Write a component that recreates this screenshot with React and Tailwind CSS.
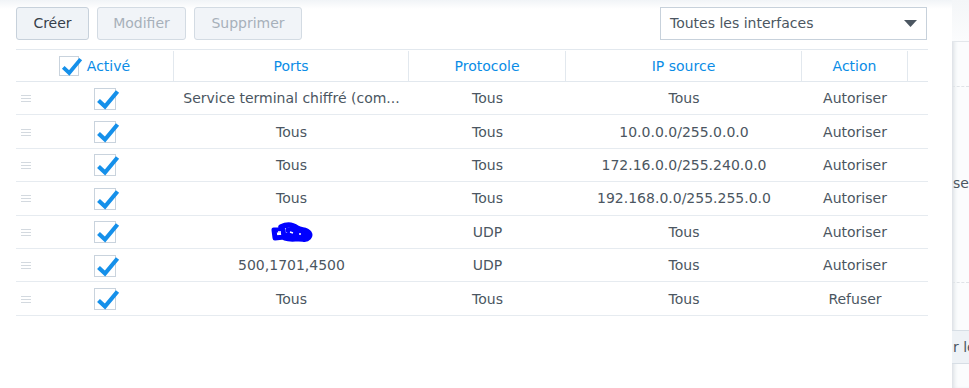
import React from 'react';

const rows = [
  { ports: 'Service terminal chiffré (com...', proto: 'Tous', ip: 'Tous', action: 'Autoriser' },
  { ports: 'Tous', proto: 'Tous', ip: '10.0.0.0/255.0.0.0', action: 'Autoriser' },
  { ports: 'Tous', proto: 'Tous', ip: '172.16.0.0/255.240.0.0', action: 'Autoriser' },
  { ports: 'Tous', proto: 'Tous', ip: '192.168.0.0/255.255.0.0', action: 'Autoriser' },
  { ports: null, proto: 'UDP', ip: 'Tous', action: 'Autoriser' },
  { ports: '500,1701,4500', proto: 'UDP', ip: 'Tous', action: 'Autoriser' },
  { ports: 'Tous', proto: 'Tous', ip: 'Tous', action: 'Refuser' },
];

const cols = 'grid grid-cols-[158px_235px_157px_236px_106px_20px]';

const Check = ({ size = 22 }) => (
  <div
    className="relative border border-[#c9d3dd] bg-white shrink-0"
    style={{ width: size, height: size }}
  >
    <svg className="absolute -top-[2px] left-0" width={size + 3} height={size + 2} viewBox="0 0 25 24">
      <path d="M3.5 13.5 L10 19.5 L22.5 4.5" fill="none" stroke="#1590ea" strokeWidth="4.2" strokeLinejoin="miter" />
    </svg>
  </div>
);

const Handle = () => (
  <div className="flex flex-col gap-[2px] w-[10px] ml-[5px]">
    <div className="h-px bg-[#d3d9df]" />
    <div className="h-px bg-[#d3d9df]" />
    <div className="h-px bg-[#d3d9df]" />
  </div>
);

const Scribble = () => (
  <svg width="42" height="22" viewBox="0 0 42 22">
    <g fill="none" stroke="#0000ff" strokeLinecap="round" strokeLinejoin="round">
      <path d="M3 9 L12 9 L13 16 L4 17 Z" strokeWidth="5" />
      <path d="M10 6 C16 3 22 4 26 7 C30 10 35 8 38 12 C40 15 37 19 32 18 C26 17 20 19 14 17" strokeWidth="5.5" />
      <path d="M17 9 L36 11 M16 14 L37 15" strokeWidth="5" />
    </g>
    <path d="M7 11 L10 11 M19 11 L22 12 M28 13 L30 13" stroke="#ffffff" strokeWidth="1.5" />
  </svg>
);

export default function App() {
  return (
    <div
      className="w-[969px] h-[388px] flex overflow-hidden bg-white text-[14px] text-[#4b5661]"
      style={{ fontFamily: '"DejaVu Sans", Verdana, sans-serif' }}
    >
      <div className="w-[952px] shrink-0 bg-[linear-gradient(to_bottom,#f1f4f7_0px,#ffffff_9px)]">
        {/* toolbar */}
        <div className="flex items-center h-[46px] pl-[16px] pr-[25px]">
          <button className="h-[33px] w-[73px] rounded-[3px] border border-[#c7d1db] bg-[#eff3f7] text-[#36404a]">
            Créer
          </button>
          <button className="h-[33px] w-[89px] ml-[8px] rounded-[3px] border border-[#d3dbe3] bg-[#f1f4f8] text-[#a7b0ba]">
            Modifier
          </button>
          <button className="h-[33px] w-[108px] ml-[8px] rounded-[3px] border border-[#d3dbe3] bg-[#f1f4f8] text-[#a7b0ba]">
            Supprimer
          </button>
          <div className="ml-auto h-[33px] w-[267px] border border-[#c7d1db] bg-white flex items-center pl-[9px] pr-[9px] text-[#4b5661]">
            <span>Toutes les interfaces</span>
            <svg className="ml-auto" width="13" height="7" viewBox="0 0 13 7">
              <path d="M0 0 L13 0 L6.5 7 Z" fill="#4b5661" />
            </svg>
          </div>
        </div>

        {/* table */}
        <div className="ml-[16px] w-[912px] mt-[3px]">
          <div className={`${cols} h-[33px] border-t border-b border-[#e2e8ee] text-[#0a8ce6] pt-[1px]`}>
            <div className="flex items-center justify-center gap-[8px] border-r border-[#e2e8ee]">
              <Check size={20} />
              <span>Activé</span>
            </div>
            <div className="flex items-center justify-center border-r border-[#e2e8ee]">Ports</div>
            <div className="flex items-center justify-center border-r border-[#e2e8ee]">Protocole</div>
            <div className="flex items-center justify-center border-r border-[#e2e8ee]">IP source</div>
            <div className="flex items-center justify-center border-r border-[#e2e8ee]">Action</div>
            <div />
          </div>
          {rows.map((r, i) => (
            <div key={i} className={`${cols} h-[33.4px] border-b border-[#e6ebf0] pt-[1px]`}>
              <div className="flex items-center">
                <Handle />
                <div className="ml-[63px]">
                  <Check />
                </div>
              </div>
              <div className="flex items-center justify-center whitespace-nowrap">
                {r.ports ?? <Scribble />}
              </div>
              <div className="flex items-center justify-center">{r.proto}</div>
              <div className="flex items-center justify-center">{r.ip}</div>
              <div className="flex items-center justify-center">{r.action}</div>
              <div />
            </div>
          ))}
        </div>
      </div>

      {/* right side panel, partly visible */}
      <div className="relative flex-1 overflow-hidden bg-[#fbfcfd] shadow-[inset_4px_0_4px_-2px_#d8dde2] flex flex-col text-[#4b5661]">
        <div className="h-[42px] border-b border-[#e3e7eb] bg-[linear-gradient(to_bottom,#f4f6f8,#fbfcfd)]" />
        <div className="h-[45px] border-b border-dashed border-[#dfe3e7]" />
        <div className="h-[196px] border-b border-dashed border-[#dfe3e7] flex items-center pl-px pb-[3px] whitespace-nowrap">
          <span>se</span>
        </div>
        <div className="mt-[47px] h-[34px] border-y border-[#d7dee5] bg-[#eef2f6] flex items-center pl-px whitespace-nowrap">
          <span>r le</span>
        </div>
      </div>
    </div>
  );
}
